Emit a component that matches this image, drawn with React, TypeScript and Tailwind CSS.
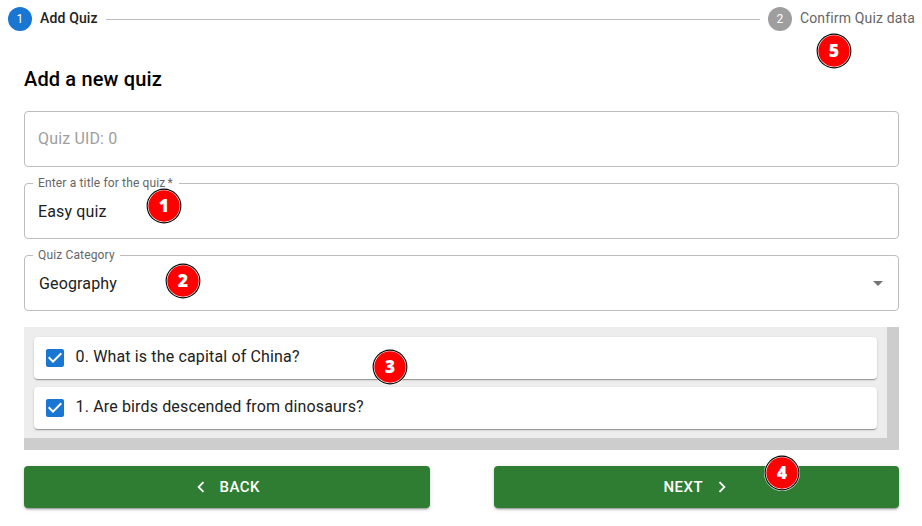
import type { ReactNode } from "react";

const questions = ["0. What is the capital of China?", "1. Are birds descended from dinosaurs?"];

function StepIcon({ n, active }: { n: number; active?: boolean }) {
  return (
    <span
      className={`flex size-6 shrink-0 items-center justify-center rounded-full text-[12px] leading-none text-white ${
        active ? "bg-[#1976d2]" : "bg-[#9e9e9e]"
      }`}
    >
      {n}
    </span>
  );
}

function Field({ label, notch, children }: { label?: ReactNode; notch?: string; children: ReactNode }) {
  return (
    <div className="relative flex h-14 items-center justify-between rounded border border-[#bdbdbd] px-[13px] text-[16px] tracking-[0.00938em]">
      {label && (
        <>
          <span className={`absolute -top-px left-2 h-px bg-white ${notch}`} />
          <span className="absolute -top-[10px] left-[13px] text-[12px] leading-[18px] whitespace-pre text-[#666]">
            {label}
          </span>
        </>
      )}
      {children}
    </div>
  );
}

function Marker({ n, place }: { n: number; place: string }) {
  return (
    <svg className={`absolute size-9 ${place}`} viewBox="0 0 36 36">
      <circle cx="18" cy="18" r="18" fill="#fff" fillOpacity="0.8" />
      <circle cx="18" cy="18" r="17.4" fill="#000" />
      <circle cx="18" cy="18" r="16.3" fill="#fff" />
      <circle cx="18" cy="18" r="15.7" fill="#f00" />
      <text
        x="18"
        y="24"
        textAnchor="middle"
        fill="#fff"
        stroke="#fff"
        strokeWidth="0.2"
        className="font-['Open_Sans','Noto_Sans',sans-serif] text-[17px] font-extrabold"
      >
        {n}
      </text>
    </svg>
  );
}

function Checkbox() {
  return (
    <svg className="size-6 shrink-0" viewBox="0 0 24 24" fill="#1976d2">
      <path d="M19 3H5c-1.11 0-2 .9-2 2v14c0 1.1.89 2 2 2h14c1.11 0 2-.9 2-2V5c0-1.1-.89-2-2-2zm-9 14l-5-5 1.41-1.41L10 14.17l7.59-7.59L19 8l-9 9z" />
    </svg>
  );
}

const raised =
  "shadow-[0px_3px_1px_-2px_rgba(0,0,0,0.2),0px_2px_2px_0px_rgba(0,0,0,0.14),0px_1px_5px_0px_rgba(0,0,0,0.12)]";
const button = `flex h-[42px] flex-1 items-center justify-center rounded bg-[#2e7d32] text-[15px] font-medium tracking-[0.02857em] text-white ${raised}`;

export default function App() {
  return (
    <div className="relative h-[526px] w-[922px] overflow-hidden bg-white font-[Roboto,sans-serif] text-[#212121]">
      <div className="flex items-center pt-[7px] pr-[7px] pl-2 text-[14px] leading-5 tracking-[0.01071em]">
        <StepIcon n={1} active />
        <span className="-mt-0.5 ml-2 font-medium">Add Quiz</span>
        <span className="mx-2 h-px flex-1 bg-[#bdbdbd]" />
        <StepIcon n={2} />
        <span className="-mt-0.5 ml-2 text-[#666]">Confirm Quiz data</span>
      </div>

      <div className="mr-[23px] ml-6 flex flex-col gap-4 pt-8">
        <h1 className="text-[20px] leading-8 font-medium tracking-[0.0075em] text-black">Add a new quiz</h1>
        <Field>
          <span className="text-[#9e9e9e]">Quiz UID: 0</span>
        </Field>
        <Field
          label={
            <>
              Enter a title for the quiz<span className="ml-[2px]">*</span>
            </>
          }
          notch="w-[146px]"
        >
          <span className="pt-0.5">Easy quiz</span>
        </Field>
        <Field label="Quiz Category" notch="w-[87px]">
          <span className="pt-0.5 pl-px">Geography</span>
          <svg className="-mr-[5px] size-6" viewBox="0 0 24 24" fill="#757575">
            <path d="M7 10l5 5 5-5z" />
          </svg>
        </Field>

        <div className="border-r-12 border-b-12 border-[#cdcdcd] bg-[#ededed] px-2.5 pt-2.5 pb-[9px]">
          <div className="flex flex-col gap-2">
            {questions.map((q) => (
              <label
                key={q}
                className="flex h-[42px] items-center rounded bg-white pl-[9px] text-[16px] tracking-[0.00938em] shadow-[0px_2px_1px_-1px_rgba(0,0,0,0.2),0px_1px_1px_0px_rgba(0,0,0,0.14),0px_1px_3px_0px_rgba(0,0,0,0.12)]"
              >
                <Checkbox />
                <span className="-mt-[3px] ml-[8.5px]">{q}</span>
              </label>
            ))}
          </div>
        </div>

        <div className="flex gap-16">
          <button className={button}>
            <svg className="mr-2 -ml-1 size-[22px]" viewBox="0 0 24 24" fill="currentColor">
              <path d="M15.41 7.41L14 6l-6 6 6 6 1.41-1.41L10.83 12z" />
            </svg>
            BACK
          </button>
          <button className={button}>
            NEXT
            <svg className="-mr-1 ml-2 size-[22px]" viewBox="0 0 24 24" fill="currentColor">
              <path d="M10 6L8.59 7.41 13.17 12l-4.58 4.59L10 18l6-6z" />
            </svg>
          </button>
        </div>
      </div>

      <Marker n={1} place="left-[146px] top-[188px]" />
      <Marker n={2} place="left-[165px] top-[263px]" />
      <Marker n={3} place="left-[372px] top-[349px]" />
      <Marker n={4} place="left-[764px] top-[455px]" />
      <Marker n={5} place="left-[816px] top-[33px]" />
    </div>
  );
}
